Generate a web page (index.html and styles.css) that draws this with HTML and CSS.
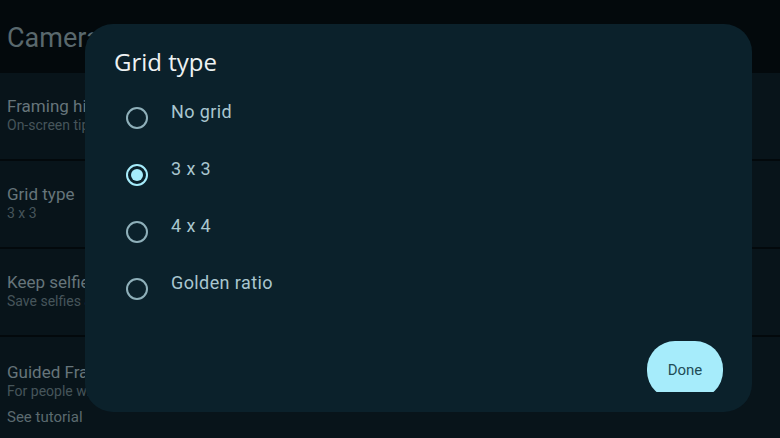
FILE: index.html
```html
<!DOCTYPE html>
<html lang="en">
<head>
    <meta charset="UTF-8">
    <meta name="viewport" content="width=device-width, initial-scale=1.0">
    <title>Camera settings</title>
<link rel="stylesheet" href="styles.css">
</head>
<body>
    <div class="screen">
        <div class="app-header">Camera</div>
        <div class="settings">
            <div class="item">
                <div class="item-title">Framing hints</div>
                <div class="item-sub">On-screen tips</div>
            </div>
            <div class="item">
                <div class="item-title">Grid type</div>
                <div class="item-sub">3 x 3</div>
            </div>
            <div class="item">
                <div class="item-title">Keep selfies as previewed</div>
                <div class="item-sub">Save selfies as they appear</div>
            </div>
            <div class="item item-last">
                <div class="item-title">Guided Frame</div>
                <div class="item-sub">For people who are blind or have low vision</div>
                <div class="item-link">See tutorial</div>
            </div>
        </div>

        <div class="dialog">
            <div class="dialog-title">Grid type</div>
            <div class="options">
                <div class="option">
                    <span class="radio"></span>
                    <span class="option-label">No grid</span>
                </div>
                <div class="option">
                    <span class="radio checked"></span>
                    <span class="option-label">3 x 3</span>
                </div>
                <div class="option">
                    <span class="radio"></span>
                    <span class="option-label">4 x 4</span>
                </div>
                <div class="option">
                    <span class="radio"></span>
                    <span class="option-label">Golden ratio</span>
                </div>
            </div>
            <div class="dialog-actions">
                <div class="btn-clip">
                    <button class="btn-done">Done</button>
                </div>
            </div>
        </div>
    </div>
</body>
</html>
```

FILE: styles.css
```css
body {
    margin: 0;
    font-family: Roboto, "Open Sans", sans-serif;
    background-color: #03090c;
}
.screen {
    position: relative;
    width: 780px;
    height: 438px;
    overflow: hidden;
    background-color: #03090c;
}
.app-header {
    height: 73px;
    box-sizing: border-box;
    padding: 22px 0 0 7px;
    font-size: 27px;
    color: #59686d;
}
.settings {
    display: flex;
    flex-direction: column;
    gap: 2px;
}
.item {
    height: 86px;
    box-sizing: border-box;
    padding: 23px 0 0 7px;
    background-color: #08141a;
    white-space: nowrap;
}
.item > div {
    width: 90px;
    overflow: hidden;
}
.item-last {
    height: 101px;
    padding-top: 25px;
}
.item-title {
    font-size: 17px;
    line-height: 20px;
    color: #66757a;
}
.item-sub {
    font-size: 14px;
    line-height: 19px;
    color: #46555a;
}
.item-link {
    margin-top: 7px;
    font-size: 15px;
    color: #5b6a6f;
}
.dialog {
    position: absolute;
    left: 85px;
    top: 24px;
    width: 667px;
    height: 388px;
    box-sizing: border-box;
    border-radius: 28px;
    background-color: #0b212b;
    padding: 22px 29px 0 29px;
    display: flex;
    flex-direction: column;
}
.dialog-title {
    font-family: "Open Sans", Roboto, sans-serif;
    font-size: 24px;
    line-height: 32px;
    color: #eef2f3;
}
.options {
    display: flex;
    flex-direction: column;
    margin-top: 11px;
}
.option {
    height: 57px;
    display: flex;
    align-items: center;
    padding-left: 12px;
}
.radio {
    width: 18px;
    height: 18px;
    border: 2px solid #8fb0ba;
    border-radius: 50%;
    position: relative;
    flex: none;
}
.radio.checked {
    border-color: #a6ecfb;
}
.radio.checked::after {
    content: "";
    position: absolute;
    left: 3px;
    top: 3px;
    width: 12px;
    height: 12px;
    border-radius: 50%;
    background-color: #a6ecfb;
}
.option-label {
    margin-left: 23px;
    margin-top: -12px;
    font-size: 18px;
    letter-spacing: 0.4px;
    color: #a9c6cf;
}
.dialog-actions {
    display: flex;
    justify-content: flex-end;
    margin-top: 24px;
}
.btn-clip {
    height: 51px;
    overflow: hidden;
}
.btn-done {
    width: 76px;
    height: 58px;
    border: none;
    border-radius: 28px;
    background-color: #a6ecfb;
    color: #1f4c57;
    font-family: Roboto, sans-serif;
    font-size: 15px;
    padding: 0;
}
```
